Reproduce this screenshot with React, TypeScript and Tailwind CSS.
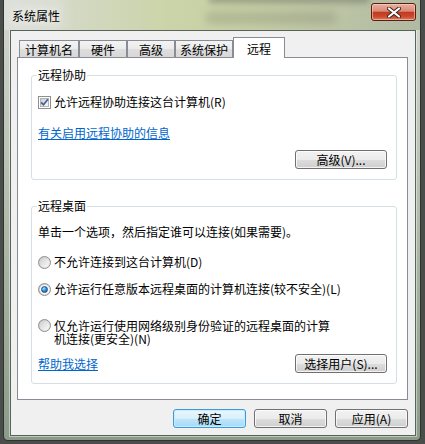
import type { ReactNode } from 'react';

const tabs = [
  { label: '计算机名', w: 'w-[60px]' },
  { label: '硬件', w: 'w-[48px]' },
  { label: '高级', w: 'w-[48px]' },
  { label: '系统保护', w: 'w-[58px]' },
];

function Checkbox() {
  return (
    <span className="relative flex h-[13px] w-[13px] shrink-0 items-center justify-center border border-[#8e8f8f] bg-white">
      <span className="h-[9px] w-[9px] border border-[#b0b4ba] bg-[linear-gradient(135deg,#c6cad0_0%,#e6e8eb_55%,#f8f8f8_100%)]" />
      <svg className="absolute left-[1px] top-[1px]" width="9" height="9" viewBox="0 0 9 9">
        <path d="M1.2 4.3 L3.5 6.8 L7.9 1.3" fill="none" stroke="#475c92" strokeWidth="1.7" />
      </svg>
    </span>
  );
}

function Radio({ checked }: { checked?: boolean }) {
  return (
    <span className="flex h-[13px] w-[13px] shrink-0 items-center justify-center rounded-full border border-[#8f8f8f] bg-[linear-gradient(135deg,#c4c4c4_0%,#f3f3f3_100%)]">
      {checked ? (
        <span className="flex h-[9px] w-[9px] items-center justify-center rounded-full bg-white">
          <span className="h-[7px] w-[7px] rounded-full border border-[#1a4d86] bg-[radial-gradient(circle_at_35%_30%,#b4e2fc_0%,#3596e0_45%,#0d4f98_100%)]" />
        </span>
      ) : (
        <span className="h-[9px] w-[9px] rounded-full bg-[linear-gradient(135deg,#d0d0d0_0%,#fafafa_100%)]" />
      )}
    </span>
  );
}

function Btn({ children, className, primary }: { children: ReactNode; className: string; primary?: boolean }) {
  const skin = primary
    ? 'border-[#3c9bd6] bg-[linear-gradient(to_bottom,#eaf6fd_0%,#d9f0fc_50%,#bee6fd_51%,#a7d9f5_100%)] shadow-[inset_0_0_0_1px_#c9ecfc]'
    : 'border-[#707070] bg-[linear-gradient(to_bottom,#f2f2f2_0%,#ebebeb_50%,#dddddd_51%,#cfcfcf_100%)] shadow-[inset_0_0_0_1px_rgba(255,255,255,0.75)]';
  return (
    <div className={`flex h-[19px] shrink-0 items-center justify-center rounded-[3px] border ${skin} ${className}`}>
      {children}
    </div>
  );
}

function GroupLabel({ children }: { children: ReactNode }) {
  return <span className="-mt-[8px] ml-[5px] self-start bg-white px-[1px] leading-[14px]">{children}</span>;
}

function TitleBar() {
  return (
    <div className="relative flex h-[30px] shrink-0 justify-between overflow-hidden bg-[linear-gradient(to_right,#dadcd6_0%,#d3d8c2_18%,#cbd4a8_40%,#c6cfa6_58%,#bcc4a5_80%,#b0baa2_100%)]">
      <div className="pointer-events-none absolute left-[202px] top-[12px] h-[12px] w-[130px] bg-[#7a7e6a] opacity-30 blur-[4px]" />
      <div className="pointer-events-none absolute left-[205px] top-[-5px] h-[8px] w-[160px] bg-[#4f5348] opacity-40 blur-[3px]" />
      <div className="pointer-events-none absolute left-[0px] top-[0px] h-[30px] w-[60px] bg-[#e6e7e4] opacity-50 blur-[6px]" />
      <span className="relative pl-[8px] pt-[9px] leading-[14px] [text-shadow:0_0_6px_rgba(255,255,255,0.95)]">系统属性</span>
      <div className="relative mr-[4px] mt-[3px] flex h-[18px] w-[45px] items-center justify-center rounded-[3px] border border-[#5a1d12] bg-[linear-gradient(to_bottom,#e9b0a2_0%,#da8a76_45%,#c2391f_52%,#c94a2f_78%,#de7a5f_100%)] shadow-[inset_0_0_0_1px_rgba(255,215,200,0.55)]">
        <svg width="14" height="11" viewBox="0 0 14 11">
          <path d="M2 1.5 L12 9.5 M12 1.5 L2 9.5" stroke="#3b2520" strokeWidth="4" strokeLinecap="round" />
          <path d="M2 1.5 L12 9.5 M12 1.5 L2 9.5" stroke="#ffffff" strokeWidth="2.2" strokeLinecap="round" />
        </svg>
      </div>
    </div>
  );
}

export default function App() {
  return (
    <div className="h-[444px] w-[425px] overflow-hidden bg-[#4a4d4a] pl-[3px] font-['Noto_Sans_CJK_SC','Noto_Sans',sans-serif] text-[12px] leading-[14px] text-black">
      <div className="flex h-[441px] w-[418px] flex-col rounded-b-[5px] border-x border-b border-[#2c352f] bg-[linear-gradient(to_bottom,#d3d6cf_0%,#bcc4b5_35%,#9dab98_75%,#8c9b89_100%)]">
        <TitleBar />
        <div className="ml-[6px] flex h-[406px] w-[406px] flex-col border border-[#56645a] bg-[#f0f0f0] pl-[6px] pt-[6px] shadow-[0_0_0_1px_rgba(255,255,255,0.45)]">
          {/* tabs */}
          <div className="flex h-[20px] items-end pl-[2px]">
            {tabs.map((t) => (
              <div
                key={t.label}
                className={`flex h-[17px] ${t.w} items-center justify-center border-x border-t border-[#898c95] bg-[linear-gradient(to_bottom,#f3f3f3_0%,#ebebeb_50%,#dedede_51%,#d8d8d8_100%)] pt-[2px]`}
              >
                {t.label}
              </div>
            ))}
            <div className="relative z-10 -mb-px flex h-[21px] w-[52px] items-start justify-center border-x border-t border-[#898c95] bg-white pt-[4px]">
              远程
            </div>
          </div>

          {/* page */}
          <div className="flex h-[343px] w-[391px] flex-col border border-[#898c95] bg-white pl-[13px] pt-[17px]">
            <div className="flex h-[105px] w-[366px] flex-col rounded-[3px] border border-[#d5dfe5]">
              <GroupLabel>远程协助</GroupLabel>
              <div className="ml-[6px] mt-[13px] flex h-[14px] items-center gap-[3px]">
                <Checkbox />
                <span>允许远程协助连接这台计算机(R)</span>
              </div>
              <span className="ml-[6px] mt-[17px] self-start text-[#0066cc] underline">有关启用远程协助的信息</span>
              <div className="mt-[10px] flex justify-end pr-[9px]">
                <Btn className="w-[92px]">高级(V)...</Btn>
              </div>
            </div>

            <div className="mt-[26px] flex h-[178px] w-[366px] flex-col rounded-[3px] border border-[#d5dfe5]">
              <GroupLabel>远程桌面</GroupLabel>
              <span className="ml-[6px] mt-[12px]">单击一个选项，然后指定谁可以连接(如果需要)。</span>
              <div className="ml-[6px] mt-[16px] flex h-[14px] items-center gap-[3px]">
                <Radio />
                <span>不允许连接到这台计算机(D)</span>
              </div>
              <div className="ml-[6px] mt-[13px] flex h-[14px] items-center gap-[3px]">
                <Radio checked />
                <span>允许运行任意版本远程桌面的计算机连接(较不安全)(L)</span>
              </div>
              <div className="ml-[6px] mt-[23px] flex items-start gap-[3px]">
                <Radio />
                <span className="leading-[13px]">
                  仅允许运行使用网络级别身份验证的远程桌面的计算
                  <br />
                  机连接(更安全)(N)
                </span>
              </div>
              <div className="mt-[9px] flex h-[19px] items-center justify-between pl-[6px] pr-[9px]">
                <span className="text-[#0066cc] underline">帮助我选择</span>
                <Btn className="w-[92px]">选择用户(S)...</Btn>
              </div>
            </div>
          </div>

          {/* dialog buttons */}
          <div className="mt-[9px] flex w-[391px] justify-end gap-[8px]">
            <Btn primary className="w-[73px]">确定</Btn>
            <Btn className="w-[73px]">取消</Btn>
            <Btn className="w-[73px]">应用(A)</Btn>
          </div>
        </div>
      </div>
    </div>
  );
}
